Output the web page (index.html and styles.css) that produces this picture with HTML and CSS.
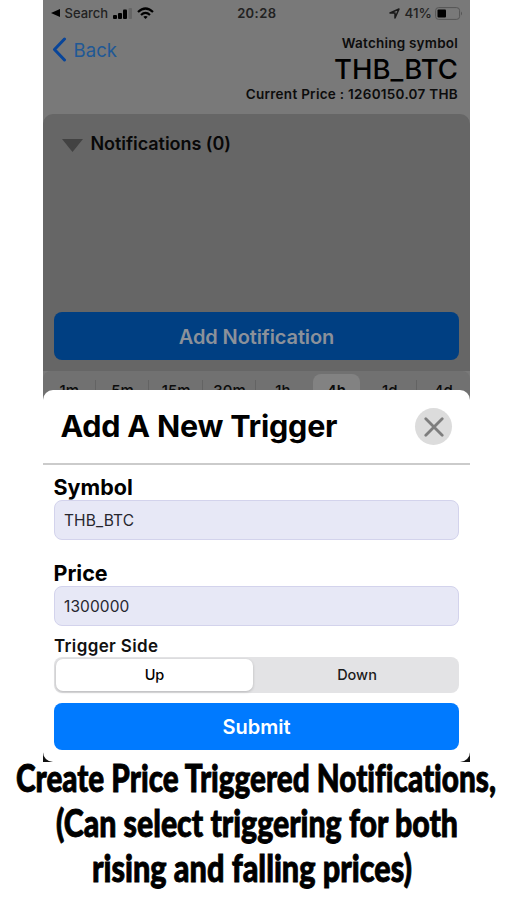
FILE: index.html
```html
<!DOCTYPE html>
<html lang="en">
<head>
    <meta charset="UTF-8">
    <meta name="viewport" content="width=device-width, initial-scale=1.0">
    <title>Add A New Trigger</title>
    <link rel="stylesheet" href="styles.css">
</head>
<body>
    <div class="phone">
        <div class="status-bar">
            <div class="status-left">
                <svg width="9" height="8" viewBox="0 0 9 8"><path d="M0 4L9 0V8Z"/></svg>
                <span class="status-search">Search</span>
                <svg class="signal" width="20" height="11" viewBox="0 0 20 11">
                    <rect x="0" y="7" width="4" height="4" rx="1"/>
                    <rect x="5" y="5" width="4" height="6" rx="1"/>
                    <rect x="10" y="1.500" width="4" height="9.500" rx="1"/>
                    <rect x="15.500" y="0" width="3.500" height="11" rx="1" fill="#656565"/>
                </svg>
                <svg class="wifi" width="17" height="13" viewBox="0 0 17 13" fill="none" stroke="#000" stroke-width="2.200">
                    <path d="M1 5Q8.500 -2 16 5"/>
                    <path d="M4 8Q8.500 3.800 13 8"/>
                    <path d="M6.300 9.800Q8.500 8 10.700 9.800L8.500 12Z" fill="#000" stroke="none"/>
                </svg>
            </div>
            <span class="status-time">20:28</span>
            <div class="status-right">
                <svg width="11" height="11" viewBox="0 0 11 11" fill="none" stroke="#1a1a1a" stroke-width="1.500" stroke-linejoin="round"><path d="M1 5L10 1L6 10V5Z"/></svg>
                <span class="status-percent">41%</span>
                <svg class="battery" width="28" height="13" viewBox="0 0 28 13">
                    <rect x=".6" y=".6" width="24" height="11.800" rx="3" fill="none" stroke="#555"/>
                    <rect x="2.500" y="2.500" width="8.500" height="8" rx="1"/>
                    <path d="M26 4.500Q28 6.500 26 8.500Z" fill="#555"/>
                </svg>
            </div>
        </div>

        <div class="header">
            <div class="back">
                <svg width="15" height="25" viewBox="0 0 15 25" fill="none" stroke="#08459a" stroke-width="3" stroke-linecap="round" stroke-linejoin="round"><path d="M12.500 2L2.500 12.500L12.500 23"/></svg>
                <span>Back</span>
            </div>
            <div class="watching">
                <div class="watching-label">Watching symbol</div>
                <div class="watching-symbol">THB_BTC</div>
                <div class="watching-price">Current Price : 1260150.07 THB</div>
            </div>
        </div>

        <div class="panel">
            <div class="panel-title">
                <svg width="21" height="13" viewBox="0 0 21 13"><path d="M0 0H21L10.500 13Z" fill="#424242"/></svg>
                <span>Notifications (0)</span>
            </div>
            <div class="btn btn-dim"><span>Add Notification</span></div>
        </div>

        <div class="intervals">
            <span>1m</span>
            <span>5m</span>
            <span>15m</span>
            <span>30m</span>
            <span>1h</span>
            <span class="active">4h</span>
            <span>1d</span>
            <span>4d</span>
        </div>

        <div class="sheet-wrap">
            <div class="sheet">
                <div class="sheet-header">
                    <span class="sheet-title">Add A New Trigger</span>
                    <div class="close">
                        <svg width="20" height="20" viewBox="0 0 20 20" stroke="#7e7e7e" stroke-width="2.800" stroke-linecap="round"><path d="M1.800 1.800L18.200 18.200M18.200 1.800L1.800 18.200"/></svg>
                    </div>
                </div>
                <div class="form">
                    <div class="label">Symbol</div>
                    <div class="input"><span>THB_BTC</span></div>
                    <div class="label label-price">Price</div>
                    <div class="input"><span>1300000</span></div>
                    <div class="side-label">Trigger Side</div>
                    <div class="segmented">
                        <span class="segment selected">Up</span>
                        <span class="segment">Down</span>
                    </div>
                    <div class="btn"><span>Submit</span></div>
                </div>
            </div>
        </div>
    </div>

    <!-- textLength condenses the heavy face -->
    <svg class="caption" width="507" height="138" viewBox="0 0 507 138">
        <text x="16" y="30" textLength="480" lengthAdjust="spacingAndGlyphs">Create Price Triggered Notifications,</text>
        <text x="56" y="75" textLength="402" lengthAdjust="spacingAndGlyphs">(Can select triggering for both</text>
        <text x="92" y="120" textLength="320" lengthAdjust="spacingAndGlyphs">rising and falling prices)</text>
    </svg>
</body>
</html>
```
FILE: styles.css
```css
* {
    box-sizing: border-box;
}

body {
    margin: 0;
    background-color: #fff;
    color: #000;
    font-family: Inter, "Liberation Sans", sans-serif;
}

svg {
    display: block;
    flex-shrink: 0;
}

span {
    white-space: nowrap;
}

.phone {
    width: 427.5px;
    height: 762px;
    margin-left: 42.5px;
    background-color: #797979;
    overflow: hidden;
    display: flex;
    flex-direction: column;
}

.status-bar {
    height: 26px;
    padding: 0 7px 0 8px;
    display: grid;
    grid-template-columns: 1fr auto 1fr;
    align-items: center;
    font-size: 13px;
    font-weight: 500;
    color: #222;
}

.status-left,
.status-right {
    display: flex;
    align-items: center;
}

.status-right {
    justify-content: flex-end;
}

.status-search {
    margin-left: 5px;
}

.signal {
    margin-left: 5px;
}

.wifi {
    margin-left: 4px;
}

.status-time {
    font-weight: 600;
    letter-spacing: 0.4px;
}

.status-percent {
    margin-left: 4px;
    font-size: 13.5px;
}

.battery {
    margin-left: 3px;
}

.header {
    height: 88px;
    padding: 0 12px 0 9px;
    display: flex;
    justify-content: space-between;
}

.back {
    height: 25px;
    margin-top: 11px;
    display: flex;
    align-items: center;
    gap: 7px;
    font-size: 18.5px;
    color: #205896;
}

.back span {
    letter-spacing: 0.1px;
}

.watching {
    padding-top: 8px;
    text-align: right;
    font-size: 13.5px;
    font-weight: 600;
    color: #0c0c0c;
}

.watching-label,
.watching-price {
    line-height: 18px;
    letter-spacing: 0.22px;
}

.watching-price {
    letter-spacing: 0.28px;
}

.watching-symbol {
    padding-top: 1px;
    font-size: 27.5px;
    line-height: 32px;
    font-weight: 500;
    color: #000;
}

.panel {
    height: 257px;
    padding: 16px 11px 11px 11.5px;
    background-color: #666;
    border-radius: 10px 10px 0 0;
    display: flex;
    flex-direction: column;
    justify-content: space-between;
}

.panel-title {
    padding-left: 8px;
    display: flex;
    align-items: center;
    gap: 7.5px;
    line-height: 28px;
    font-size: 18px;
    font-weight: 600;
    letter-spacing: -0.05px;
    color: #080808;
}

.panel-title svg {
    margin-top: 3px;
}

.btn {
    height: 47px;
    border-radius: 8px;
    background-color: #007aff;
    color: #fff;
    display: flex;
    align-items: center;
    justify-content: center;
    font-size: 20px;
    font-weight: 600;
}

.btn-dim {
    height: 48px;
    padding-top: 1px;
    letter-spacing: -0.1px;
    background-color: #003f82;
    color: #8b919a;
}

/* the lower part slides under the sheet */
.intervals {
    height: 36px;
    margin-bottom: -17px;
    flex-shrink: 0;
    background-color: #717171;
    display: grid;
    grid-template-columns: repeat(8, 1fr);
    padding-top: 3px;
    border-radius: 8px 8px 0 0;
}

.intervals span {
    height: 32px;
    line-height: 33px;
    text-align: center;
    font-size: 15px;
    font-weight: 500;
    color: #0c0c0c;
    background: linear-gradient(#636363, #636363) right 6px / 1px 20px no-repeat;
}

.intervals span:nth-child(5),
.intervals span:last-child {
    background: none;
}

.intervals .active {
    margin: 0 3px;
    border-radius: 8px;
    background: #828282;
    font-weight: 600;
}

.sheet-wrap {
    flex: 1;
    position: relative;
    background: linear-gradient(transparent 363px, #111 363px);
}

.sheet {
    height: 100%;
    background-color: #fff;
    border-radius: 10px;
}

.sheet-header {
    height: 75px;
    padding: 0 18px;
    border-bottom: 2px solid #cbcbcb;
    display: flex;
    align-items: center;
    justify-content: space-between;
}

.sheet-title {
    margin-top: -2px;
    font-size: 30.5px;
    font-weight: 700;
    letter-spacing: -0.22px;
}

.close {
    width: 37px;
    height: 37px;
    border-radius: 50%;
    background-color: #dcdcdc;
    display: flex;
    align-items: center;
    justify-content: center;
}

.form {
    padding: 9px 11px 0 11.5px;
}

.label {
    height: 26px;
    line-height: 26px;
    margin-left: -0.5px;
    font-size: 21.5px;
    font-weight: 700;
}

.label-price {
    margin-top: 20px;
}

.input {
    height: 40px;
    padding: 0 9px;
    border: 1px solid #d3d3ec;
    border-radius: 8px;
    background-color: #e7e8f6;
    display: flex;
    align-items: center;
    font-size: 15.5px;
    letter-spacing: 0.1px;
    color: #26262e;
}

.side-label {
    margin-top: 9px;
    height: 22px;
    line-height: 23px;
    font-size: 17px;
    font-weight: 600;
    letter-spacing: 0.35px;
    color: #111;
}

.segmented {
    height: 36px;
    padding: 2px;
    margin-bottom: 10px;
    border-radius: 8px;
    background-color: #e3e3e5;
    display: flex;
}

.segment {
    flex: 1;
    line-height: 32px;
    text-align: center;
    font-size: 14.5px;
    font-weight: 500;
    color: #1c1c1c;
    padding-left: 4px;
}

.selected {
    flex: 0 0 197px;
    padding-left: 0;
    border-radius: 7px;
    background-color: #fff;
    box-shadow: 0 1px 3px rgba(0, 0, 0, 0.2);
    color: #000;
}

.caption {
    font-family: Lato, sans-serif;
    font-size: 38px;
    font-weight: 900;
    font-variant-ligatures: none;
    stroke: #000;
    stroke-width: 0.9px;
}
```
